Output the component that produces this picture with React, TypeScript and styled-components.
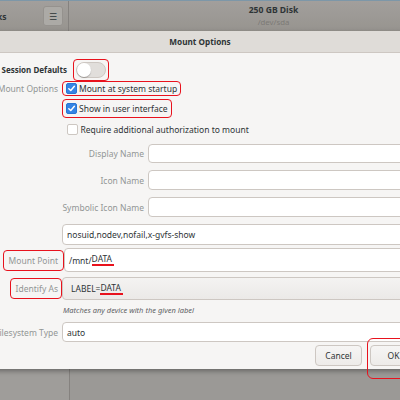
import styled, { createGlobalStyle } from "styled-components";

const GlobalStyle = createGlobalStyle`
  html, body {
    margin: 0;
    padding: 0;
  }
  body {
    font-family: "Noto Sans", "DejaVu Sans", sans-serif;
    color: #2e3436;
  }
`;

const Screen = styled.div`
  width: 400px;
  height: 400px;
  overflow: hidden;
  display: flex;
  flex-direction: column;
  align-items: flex-start;
  background: #9b9996;
`;

const TopBar = styled.div`
  width: 478px;
  height: 30px;
  flex-shrink: 0;
  display: flex;
  border-top: 1px solid #7d97a8;
  background: linear-gradient(#a29f9c, #97948f);
`;

const SideHead = styled.div`
  width: 69px;
  flex-shrink: 0;
  display: flex;
  align-items: center;
  justify-content: space-between;
  border-right: 1px solid #85827f;
  overflow: hidden;
  padding-right: 5px;
  box-sizing: border-box;
`;

const AppName = styled.span`
  font-size: 8.5px;
  font-weight: bold;
  color: #2e3436;
  margin-left: -16px;
`;

const MenuButton = styled.div`
  width: 20px;
  height: 20px;
  border-radius: 3px;
  background: #acaaa6;
  border: 1px solid #95928e;
  box-sizing: border-box;
  display: flex;
  align-items: center;
  justify-content: center;
  font-size: 9px;
  color: #2e3436;
`;

const DiskTitle = styled.div`
  flex: 1;
  display: flex;
  flex-direction: column;
  align-items: center;
  justify-content: center;
  line-height: 12px;
`;

const DiskName = styled.span`
  font-size: 8.6px;
  font-weight: bold;
  color: #2e3436;
`;

const DiskDev = styled.span`
  font-size: 7.8px;
  color: #7c7a76;
`;

const Dialog = styled.div`
  margin-left: -60px;
  width: 520px;
  height: 338px;
  flex-shrink: 0;
  display: flex;
  flex-direction: column;
  background: #f6f5f4;
  box-shadow: 0 2px 5px rgba(0, 0, 0, 0.35);
  position: relative;
  z-index: 1;
`;

const DialogHeader = styled.div`
  height: 22px;
  flex-shrink: 0;
  display: flex;
  align-items: center;
  justify-content: center;
  background: #dfdcd8;
  border-bottom: 1px solid #cdc7c2;
  box-sizing: border-box;
  font-size: 8.2px;
  font-weight: bold;
  color: #2e3436;
`;

const Body = styled.div`
  flex: 1;
  display: flex;
  flex-direction: column;
  padding: 7px 43px 0 0;
`;

const Row = styled.div<{ $h: number; $mt?: number }>`
  display: flex;
  align-items: center;
  gap: 4px;
  height: ${(p) => p.$h}px;
  margin-top: ${(p) => p.$mt ?? 0}px;
  flex-shrink: 0;
`;

const Label = styled.div<{ $w?: number }>`
  width: ${(p) => p.$w ?? 118}px;
  flex-shrink: 0;
  text-align: right;
  font-size: 8.5px;
  color: #929595;
  white-space: nowrap;
  display: flex;
  justify-content: flex-end;
`;

const BoldLabel = styled(Label)`
  color: #2e3436;
  font-weight: bold;
  font-size: 8px;
`;

const Field = styled.div<{ $indent?: number }>`
  flex: 1;
  display: flex;
  align-items: center;
  gap: 3px;
  min-width: 0;
  height: 100%;
  padding-left: ${(p) => p.$indent ?? 0}px;
`;

const Highlight = styled.span<{ $pad?: string; $over?: number }>`
  display: inline-flex;
  align-items: center;
  gap: 2px;
  border: 1.5px solid #e8121d;
  border-radius: 4px;
  padding: ${(p) => p.$pad ?? "1px 3px"};
  margin-right: ${(p) => -(p.$over ?? 0)}px;
`;

const Switch = styled.div`
  width: 30px;
  height: 16px;
  border-radius: 8px;
  background: #e1dedb;
  border: 1px solid #cdc7c2;
  box-sizing: border-box;
  display: flex;
  align-items: center;
`;

const Knob = styled.div`
  width: 14px;
  height: 14px;
  border-radius: 50%;
  background: #fff;
  box-shadow: 0 1px 1px rgba(0, 0, 0, 0.25);
`;

const Check = styled.span<{ $on?: boolean }>`
  width: 11px;
  height: 11px;
  box-sizing: border-box;
  border-radius: 2px;
  border: 1px solid ${(p) => (p.$on ? "#2a76d3" : "#cdc7c2")};
  background: ${(p) => (p.$on ? "#3584e4" : "#fff")};
  display: inline-flex;
  align-items: center;
  justify-content: center;
  flex-shrink: 0;
`;

const CheckText = styled.span`
  font-size: 8.5px;
  color: #2e3436;
  white-space: nowrap;
`;

const Entry = styled.div<{ $combo?: boolean }>`
  flex: 1;
  height: 100%;
  box-sizing: border-box;
  border: 1px solid #cdc7c2;
  border-radius: 4px;
  background: ${(p) =>
    p.$combo ? "linear-gradient(#f4f3f2, #ebe9e7)" : "#ffffff"};
  display: flex;
  align-items: center;
  padding-left: ${(p) => (p.$combo ? 8 : 4)}px;
  font-size: 8.5px;
  color: #2e3436;
  white-space: nowrap;
  overflow: hidden;
`;

const Marked = styled.span`
  border-bottom: 2px solid #e8121d;
  line-height: 10px;
  padding-right: 2px;
`;

const Hint = styled.div`
  font-size: 7.5px;
  font-style: italic;
  color: #5e6264;
  padding-left: 1px;
`;

const Footer = styled.div`
  display: flex;
  justify-content: flex-end;
  gap: 8px;
  margin-top: 3px;
`;

const Button = styled.div`
  width: 47px;
  height: 21px;
  box-sizing: border-box;
  border: 1px solid #cdc7c2;
  border-radius: 4px;
  background: linear-gradient(#f6f5f4, #edebe9);
  display: flex;
  align-items: center;
  justify-content: center;
  font-size: 8.5px;
  color: #2e3436;
  position: relative;
`;

const Ring = styled.span`
  position: absolute;
  left: -4px;
  top: -8px;
  width: 40px;
  height: 41px;
  box-sizing: border-box;
  border: 1.5px solid #e8121d;
  border-radius: 6px;
`;

const Below = styled.div`
  flex: 1;
  align-self: stretch;
  display: flex;
`;

const BelowSide = styled.div`
  width: 69px;
  border-right: 1px solid #85827f;
  background: #9f9d9a;
`;

function Tick() {
  return (
    <svg width="9" height="9" viewBox="0 0 10 10">
      <path
        d="M2 5.2 L4.2 7.3 L8.2 2.6"
        fill="none"
        stroke="#fff"
        strokeWidth="1.6"
        strokeLinecap="round"
        strokeLinejoin="round"
      />
    </svg>
  );
}

export default function App() {
  return (
    <>
      <GlobalStyle />
      <Screen>
        <TopBar>
          <SideHead>
            <AppName>Disks</AppName>
            <MenuButton>☰</MenuButton>
          </SideHead>
          <DiskTitle>
            <DiskName>250 GB Disk</DiskName>
            <DiskDev>/dev/sda</DiskDev>
          </DiskTitle>
        </TopBar>
        <Dialog>
          <DialogHeader>Mount Options</DialogHeader>
          <Body>
            <Row $h={19}>
              <BoldLabel $w={127}>Session Defaults</BoldLabel>
              <Field $indent={2}>
                <Highlight $pad="2px 2px">
                  <Switch>
                    <Knob />
                  </Switch>
                </Highlight>
              </Field>
            </Row>
            <Row $h={19}>
              <Label>Mount Options</Label>
              <Field>
                <Highlight $pad="1px 3px">
                  <Check $on>
                    <Tick />
                  </Check>
                  <CheckText>Mount at system startup</CheckText>
                </Highlight>
              </Field>
            </Row>
            <Row $h={21}>
              <Label />
              <Field>
                <Highlight $pad="3px 3px">
                  <Check $on>
                    <Tick />
                  </Check>
                  <CheckText>Show in user interface</CheckText>
                </Highlight>
              </Field>
            </Row>
            <Row $h={20}>
              <Label />
              <Field $indent={4.5}>
                <Check />
                <CheckText>Require additional authorization to mount</CheckText>
              </Field>
            </Row>
            <Row $h={19} $mt={5}>
              <Label $w={204}>Display Name</Label>
              <Entry />
            </Row>
            <Row $h={20} $mt={7}>
              <Label $w={204}>Icon Name</Label>
              <Entry />
            </Row>
            <Row $h={20} $mt={7}>
              <Label $w={204}>Symbolic Icon Name</Label>
              <Entry />
            </Row>
            <Row $h={21} $mt={7}>
              <Label />
              <Entry>nosuid,nodev,nofail,x-gvfs-show</Entry>
            </Row>
            <Row $h={24} $mt={3}>
              <Label>
                <Highlight $pad="4px 5px" $over={6}>
                  Mount Point
                </Highlight>
              </Label>
              <Entry style={{ marginLeft: 2 }}>
                /mnt/<Marked>DATA</Marked>
              </Entry>
            </Row>
            <Row $h={23} $mt={5}>
              <Label>
                <Highlight $pad="4px 3px 4px 5px" $over={4}>
                  Identify As
                </Highlight>
              </Label>
              <Entry $combo>
                LABEL=<Marked>DATA</Marked>
              </Entry>
            </Row>
            <Row $h={16} $mt={2}>
              <Label />
              <Hint>Matches any device with the given label</Hint>
            </Row>
            <Row $h={20} $mt={4}>
              <Label>Filesystem Type</Label>
              <Entry>auto</Entry>
            </Row>
            <Footer>
              <Button>Cancel</Button>
              <Button>
                OK
                <Ring />
              </Button>
            </Footer>
          </Body>
        </Dialog>
        <Below>
          <BelowSide />
        </Below>
      </Screen>
    </>
  );
}
